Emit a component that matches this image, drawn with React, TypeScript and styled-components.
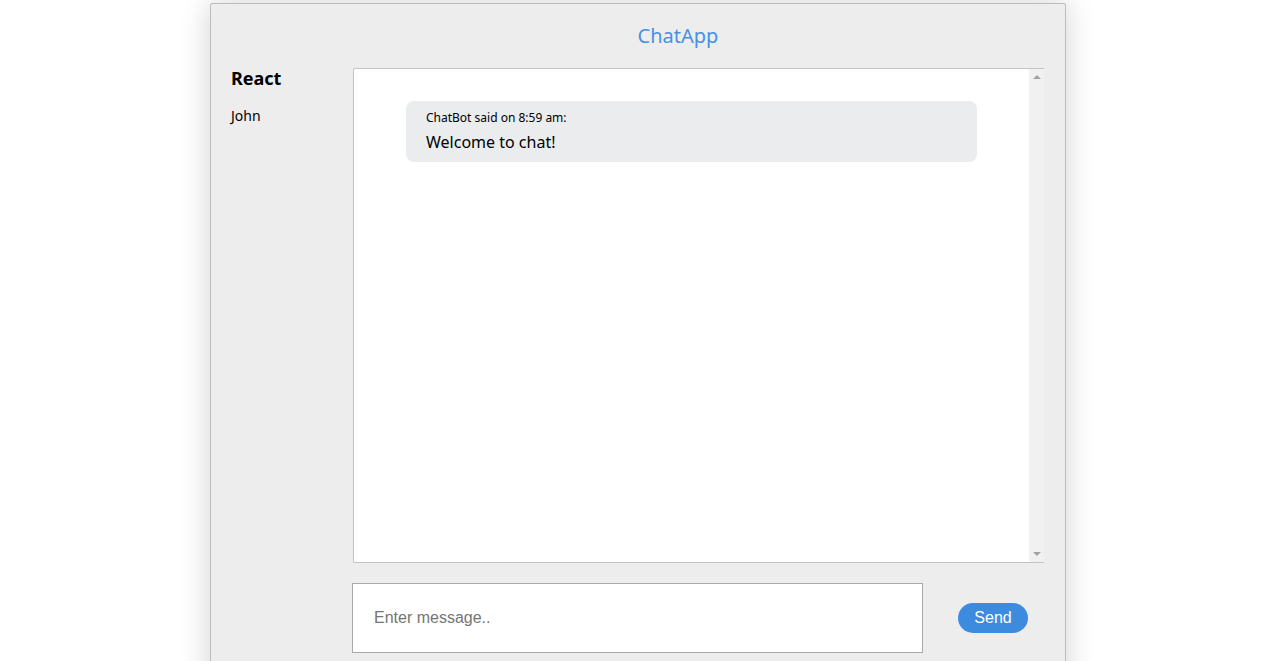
import React from "react";
import styled, { createGlobalStyle } from "styled-components";

const Global = createGlobalStyle`
  html, body { margin: 0; padding: 0; background: #ffffff; overflow: hidden; }
  body { font-family: "Noto Sans", "Open Sans", sans-serif; color: #000; }
`;

const Shell = styled.div`
  box-sizing: border-box;
  width: 856px;
  height: 700px;
  margin: 3px 0 0 210px;
  background: #ededed;
  border: 1px solid #bdbdbd;
  border-radius: 2px;
  box-shadow: 0 0 30px rgba(0, 0, 0, 0.18);
  display: flex;
  flex-direction: column;
`;

const Header = styled.h1`
  margin: 0;
  height: 64px;
  display: flex;
  align-items: center;
  justify-content: center;
  font-size: 20px;
  font-weight: 400;
  color: #4a90e2;
  padding: 0 0 2px 80px;
  box-sizing: border-box;
`;

const Body = styled.div`
  display: grid;
  grid-template-columns: 142px 1fr;
  grid-template-rows: 495px auto;
  row-gap: 20px;
  padding-right: 21px;
`;

const Sidebar = styled.aside`
  padding-left: 20px;
  grid-row: 1 / 3;
`;

const RoomTitle = styled.h2`
  margin: 0;
  font-size: 18px;
  font-weight: 700;
  line-height: 20px;
`;

const User = styled.div`
  font-size: 14px;
  margin-top: 18px;
  line-height: 20px;
`;

const Messages = styled.div`
  box-sizing: border-box;
  background: #ffffff;
  border: 1px solid #c4c4c4;
  border-right: none;
  border-radius: 2px 0 0 2px;
  display: flex;
  overflow: hidden;
`;

const Feed = styled.div`
  flex: 1;
  padding: 32px 52px 0 52px;
`;

const ScrollTrack = styled.div`
  width: 15px;
  background: #f1f1f1;
  display: flex;
  flex-direction: column;
  justify-content: space-between;
  align-items: center;
  padding: 6px 0 6px;
  box-sizing: border-box;
`;

const Arrow = styled.div<{ $down?: boolean }>`
  width: 0;
  height: 0;
  border-left: 4px solid transparent;
  border-right: 4px solid transparent;
  ${(p) =>
    p.$down
      ? "border-top: 4px solid #a3a3a3;"
      : "border-bottom: 4px solid #a3a3a3;"}
`;

const Bubble = styled.div`
  background: #eaeced;
  border-radius: 8px;
  padding: 9px 20px 8px 20px;
  height: 61px;
  box-sizing: border-box;
`;

const Meta = styled.div`
  font-size: 12px;
  line-height: 16px;
`;

const Text = styled.div`
  font-size: 16px;
  line-height: 22px;
  margin-top: 5px;
`;

const Composer = styled.form`
  margin: 0 0 0 -1px;
  display: flex;
  align-items: center;
`;

const Input = styled.input`
  box-sizing: border-box;
  width: 571px;
  height: 70px;
  border: 1px solid #a9a9a9;
  background: #fff;
  padding: 0 21px;
  font-family: "Liberation Sans", Arial, sans-serif;
  font-size: 16px;
  outline: none;
  &::placeholder { color: #757575; }
`;

const SendButton = styled.button`
  margin-left: 35px;
  width: 70px;
  height: 30px;
  border: none;
  border-radius: 15px;
  background: #3d8bdf;
  color: #fff;
  font-family: "Liberation Sans", Arial, sans-serif;
  font-size: 16px;
  padding: 0;
  cursor: pointer;
`;

export default function App() {
  return (
    <>
      <Global />
      <Shell>
        <Header>ChatApp</Header>
        <Body>
          <Sidebar>
            <RoomTitle>React</RoomTitle>
            <User>John</User>
          </Sidebar>
          <Messages>
            <Feed>
              <Bubble>
                <Meta>ChatBot said on 8:59 am:</Meta>
                <Text>Welcome to chat!</Text>
              </Bubble>
            </Feed>
            <ScrollTrack>
              <Arrow />
              <Arrow $down />
            </ScrollTrack>
          </Messages>
          <Composer onSubmit={(e) => e.preventDefault()}>
            <Input placeholder="Enter message.." />
            <SendButton type="submit">Send</SendButton>
          </Composer>
        </Body>
      </Shell>
    </>
  );
}
